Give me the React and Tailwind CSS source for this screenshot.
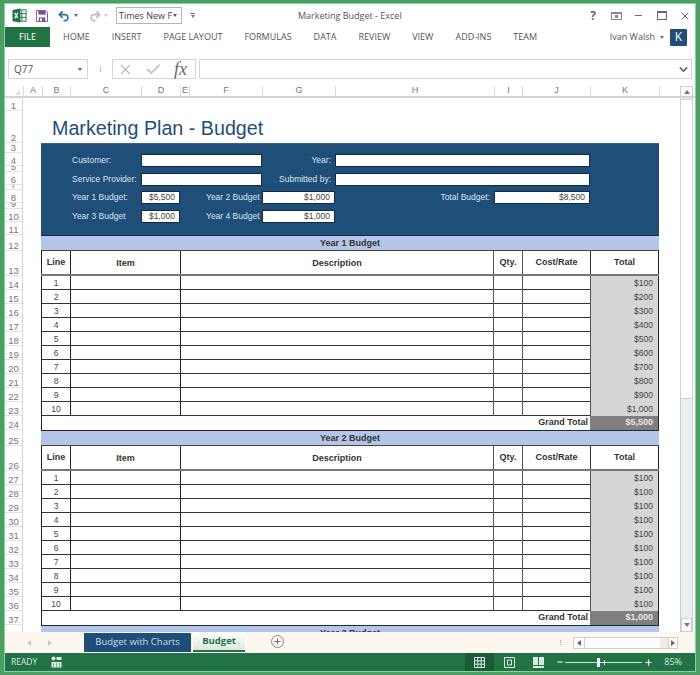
import { ChevronDown, Minus, Plus, X, Check } from 'lucide-react';

const FONT = "font-['Liberation_Sans',Arial,sans-serif]";
const UI_FONT = "font-['Open_Sans','Noto_Sans',sans-serif]";

const RIBBON_TABS = ['HOME', 'INSERT', 'PAGE LAYOUT', 'FORMULAS', 'DATA', 'REVIEW', 'VIEW', 'ADD-INS', 'TEAM'];

const COLUMNS = [
  { label: 'A', width: 'w-[19px]' },
  { label: 'B', width: 'w-[28px]' },
  { label: 'C', width: 'w-[71px]' },
  { label: 'D', width: 'w-[39px]' },
  { label: 'E', width: 'w-[9px]' },
  { label: 'F', width: 'w-[73px]' },
  { label: 'G', width: 'w-[73px]' },
  { label: 'H', width: 'w-[159px]' },
  { label: 'I', width: 'w-[28px]' },
  { label: 'J', width: 'w-[68px]' },
  { label: 'K', width: 'w-[69px]' },
];

const ROW_HEADERS = [
  { n: 1, h: 'h-[13px]' }, { n: 2, h: 'h-[32px]' }, { n: 3, h: 'h-[10px]' }, { n: 4, h: 'h-[13px]' },
  { n: 5, h: 'h-[6px]' }, { n: 6, h: 'h-[13px]' }, { n: 7, h: 'h-[5px]' }, { n: 8, h: 'h-[13px]' },
  { n: 9, h: 'h-[6px]' }, { n: 10, h: 'h-[13px]' }, { n: 11, h: 'h-[13px]' }, { n: 12, h: 'h-[16px]' },
  { n: 13, h: 'h-[25px]' }, { n: 14, h: 'h-[14px]' }, { n: 15, h: 'h-[14px]' }, { n: 16, h: 'h-[14px]' },
  { n: 17, h: 'h-[14px]' }, { n: 18, h: 'h-[14px]' }, { n: 19, h: 'h-[14px]' }, { n: 20, h: 'h-[14px]' },
  { n: 21, h: 'h-[14px]' }, { n: 22, h: 'h-[14px]' }, { n: 23, h: 'h-[14px]' }, { n: 24, h: 'h-[14px]' },
  { n: 25, h: 'h-[16px]' }, { n: 26, h: 'h-[25px]' }, { n: 27, h: 'h-[14px]' }, { n: 28, h: 'h-[14px]' },
  { n: 29, h: 'h-[14px]' }, { n: 30, h: 'h-[14px]' }, { n: 31, h: 'h-[14px]' }, { n: 32, h: 'h-[14px]' },
  { n: 33, h: 'h-[14px]' }, { n: 34, h: 'h-[14px]' }, { n: 35, h: 'h-[14px]' }, { n: 36, h: 'h-[14px]' },
  { n: 37, h: 'h-[14px]' },
];

const YEAR_1 = ['$100', '$200', '$300', '$400', '$500', '$600', '$700', '$800', '$900', '$1,000'];
const YEAR_2 = Array(10).fill('$100');

function ExcelIcon() {
  return (
    <svg width="15" height="15" viewBox="0 0 16 15">
      <rect x="6" y="1.5" width="9" height="12" fill="#fff" stroke="#1e7145" />
      <path d="M10.5 2v11M6 5.5h9M6 9.5h9" stroke="#1e7145" strokeWidth="1" />
      <path d="M0.5 1.5 9 0v15L0.5 13.5z" fill="#1e7145" />
      <path d="M2.8 4.5 6.2 10.5M6.2 4.5 2.8 10.5" stroke="#fff" strokeWidth="1.3" />
    </svg>
  );
}

function SaveIcon() {
  return (
    <svg width="12" height="12" viewBox="0 0 13 13">
      <path d="M0.5 0.5h10l2 2v10h-12z" fill="#fff" stroke="#7b4b94" />
      <rect x="2.5" y="1" width="8" height="4" fill="#7b4b94" />
      <rect x="3" y="8" width="7" height="4.5" fill="#7b4b94" />
      <rect x="4.5" y="9" width="2" height="3" fill="#fff" />
    </svg>
  );
}

function UndoIcon({ color, flip }) {
  return (
    <svg width="13" height="12" viewBox="0 0 14 12" className={flip ? '-scale-x-100' : ''}>
      <path d="M5 1 1.5 4.5 5 8" fill="none" stroke={color} strokeWidth="1.8" />
      <path d="M2 4.5h6.5a3.5 3.5 0 0 1 0 6.5H6" fill="none" stroke={color} strokeWidth="1.8" />
    </svg>
  );
}

function Caret({ className }) {
  return <span className={`w-0 h-0 border-x-[2.5px] border-x-transparent border-t-[3px] ${className}`} />;
}

function TitleBar() {
  return (
    <div className="h-[23px] flex items-center relative">
      <div className="flex items-center pl-[7px] shrink-0">
        <ExcelIcon />
        <div className="ml-[9px]"><SaveIcon /></div>
        <div className="ml-[10px]"><UndoIcon color="#2f6ea8" /></div>
        <Caret className="ml-[3px] border-t-[#666]" />
        <div className="ml-[10px]"><UndoIcon color="#bdbdbd" flip /></div>
        <Caret className="ml-[3px] border-t-[#ccc]" />
        <div className="ml-[8px] w-[66px] h-[17px] border border-[#b5b5b5] flex items-center justify-between pl-[2px] pr-[4px]">
          <span className={`${UI_FONT} text-[9px] text-[#444] whitespace-nowrap`}>Times New F</span>
          <Caret className="border-t-[#555]" />
        </div>
        <div className="ml-[8px] flex flex-col items-center gap-[1px]">
          <span className="w-[5px] h-px bg-[#777]" />
          <Caret className="border-t-[#777]" />
        </div>
      </div>
      <div className={`${UI_FONT} absolute left-[293px] top-[5px] text-[9px] text-[#555] whitespace-nowrap`}>
        Marketing Budget - Excel
      </div>
      <div className="ml-auto flex items-center pr-[4px] text-[#666]">
        <span className={`${UI_FONT} text-[12px] font-bold w-[10px] text-center`}>?</span>
        <span className="ml-[13px] w-[11px] h-[8px] border border-[#888] border-t-2 flex items-center justify-center">
          <span className="w-[3px] h-[3px] bg-[#888]" />
        </span>
        <Minus size={11} strokeWidth={2} className="ml-[11px]" />
        <span className="ml-[13px] w-[10px] h-[9px] border border-[#666] border-t-2" />
        <X size={12} strokeWidth={2} className="ml-[12px]" />
      </div>
    </div>
  );
}

function RibbonTabs() {
  return (
    <div className={`${UI_FONT} h-[20px] flex items-center text-[9px] text-[#555] relative`}>
      <div className="w-[45px] h-full bg-[#217346] text-white flex items-center justify-center">FILE</div>
      <div className="pl-[13px] flex items-center gap-[22px]">
        {RIBBON_TABS.map((tab) => (
          <div key={tab} className="whitespace-nowrap">{tab}</div>
        ))}
      </div>
      <div className="ml-auto flex items-center pr-[8px]">
        <span className="text-[9px] text-[#555] whitespace-nowrap">Ivan Walsh</span>
        <Caret className="ml-[5px] border-t-[#777]" />
        <span className="ml-[6px] w-[17px] h-[17px] bg-[#1f4e79] text-white text-[12px] flex items-center justify-center rounded-[1px]">K</span>
      </div>
    </div>
  );
}

function FormulaBar() {
  return (
    <div className="h-[39px] pt-[12px] pl-[3px] pr-[3px] flex items-start text-[#555]">
      <div className={`${UI_FONT} w-[80px] h-[20px] border border-[#d4d4d4] flex items-center justify-between pl-[5px] pr-[5px] text-[10px]`}>
        Q77
        <Caret className="border-t-[#666]" />
      </div>
      <div className="w-[24px] h-[20px] flex flex-col items-center justify-center gap-[1px]">
        <span className="w-[1px] h-[1px] bg-[#999]" />
        <span className="w-[1px] h-[1px] bg-[#999]" />
        <span className="w-[1px] h-[1px] bg-[#999]" />
      </div>
      <div className="w-[84px] h-[20px] border border-[#d4d4d4] flex items-center pl-[4px]">
        <X size={17} strokeWidth={1.5} className="text-[#b8b8b8]" />
        <Check size={17} strokeWidth={2.5} className="ml-[11px] text-[#c4c4c4]" />
        <span className="ml-[12px] font-['Liberation_Serif',serif] italic text-[18px] leading-none text-[#666]">fx</span>
      </div>
      <div className="ml-[3px] flex-1 h-[20px] border border-[#d4d4d4] flex items-center justify-end pr-[1px]">
        <ChevronDown size={13} strokeWidth={3} className="text-[#666]" />
      </div>
    </div>
  );
}

function ColumnHeaders() {
  return (
    <div className={`${FONT} h-[12px] flex items-stretch text-[9px] text-[#777] border-b-2 border-[#d4d4d4]`}>
      <div className="w-[18px] shrink-0 relative">
        <span className="absolute right-[3px] bottom-[1px] w-0 h-0 border-l-[5px] border-l-transparent border-b-[5px] border-b-[#ddd]" />
      </div>
      {COLUMNS.map((col) => (
        <div key={col.label} className={`${col.width} shrink-0 border-l border-[#dcdcdc] flex items-center justify-center`}>
          {col.label}
        </div>
      ))}
      <div className="w-[21px] border-l border-[#dcdcdc]" />
      <div className="w-[13px] h-[11px] border border-[#cfcfcf] bg-white flex items-center justify-center">
        <span className="w-0 h-0 border-x-[3px] border-x-transparent border-b-[4px] border-b-[#777]" />
      </div>
    </div>
  );
}

function RowHeaders() {
  return (
    <div className={`${FONT} w-[18px] shrink-0 border-r border-[#d4d4d4] text-[9.5px] text-[#777]`}>
      {ROW_HEADERS.map((row) => (
        <div key={row.n} className={`${row.h} border-b border-[#e3e3e3] flex items-end justify-center overflow-hidden leading-[9px]`}>
          {row.n}
        </div>
      ))}
    </div>
  );
}

function FieldLabel({ className = '', children }) {
  return <div className={`text-[8.5px] leading-[13px] text-[#d9e4ef] whitespace-nowrap ${className}`}>{children}</div>;
}

function Field({ className = '', children }) {
  return (
    <div className={`bg-white border border-[#0e2a47] h-[13px] text-[8.5px] leading-[11px] text-[#444] text-right pr-[4px] ${className}`}>
      {children}
    </div>
  );
}

function HeaderPanel() {
  return (
    <div className="bg-[#1f4e79] h-[92px] pt-[10px] grid grid-cols-[29px_71px_39px_9px_73px_73px_159px_96px_68px] grid-rows-[13px_13px_13px_13px] gap-y-[5.5px] border-t border-[#3b6288]">
      <FieldLabel className="col-start-2 pl-[2px]">Customer:</FieldLabel>
      <Field className="col-start-3 col-span-3" />
      <FieldLabel className="col-start-6 text-right pr-[4px]">Year:</FieldLabel>
      <Field className="col-start-7 col-span-2" />

      <FieldLabel className="col-start-2 pl-[2px]">Service Provider:</FieldLabel>
      <Field className="col-start-3 col-span-3" />
      <FieldLabel className="col-start-6 text-right pr-[4px]">Submitted by:</FieldLabel>
      <Field className="col-start-7 col-span-2" />

      <FieldLabel className="col-start-2 pl-[2px]">Year 1 Budget:</FieldLabel>
      <Field className="col-start-3">$5,500</Field>
      <FieldLabel className="col-start-4 col-span-2 pl-[26px]">Year 2 Budget</FieldLabel>
      <Field className="col-start-6">$1,000</Field>
      <FieldLabel className="col-start-7 text-right pr-[4px]">Total Budget:</FieldLabel>
      <Field className="col-start-8">$8,500</Field>

      <FieldLabel className="col-start-2 pl-[2px]">Year 3 Budget</FieldLabel>
      <Field className="col-start-3">$1,000</Field>
      <FieldLabel className="col-start-4 col-span-2 pl-[26px]">Year 4 Budget</FieldLabel>
      <Field className="col-start-6">$1,000</Field>
    </div>
  );
}

function BudgetBand({ title }) {
  return (
    <div className="h-[16px] bg-[#b4c6e7] border-t border-[#1c2b3a] border-b border-b-[#444] text-[9px] leading-[14px] font-bold text-[#333] text-center">
      {title}
    </div>
  );
}

const TABLE_COLS = 'grid grid-cols-[29px_110px_313px_29px_68px_69px]';

function BudgetTable({ title, totals, grandTotal }) {
  return (
    <div>
      <BudgetBand title={title} />
      <div className={`${TABLE_COLS} h-[25px] border-b-[2px] border-[#777] text-[9px] font-bold text-[#333] text-center bg-white`}>
        <div className="border-l border-[#222] flex items-center justify-center">Line</div>
        <div className="border-l border-[#222] pt-[6px]">Item</div>
        <div className="border-l border-[#222] pt-[6px]">Description</div>
        <div className="border-l border-[#555] flex items-center justify-center">Qty.</div>
        <div className="border-l border-[#555] flex items-center justify-center">Cost/Rate</div>
        <div className="border-l border-[#333] border-r border-r-[#222] flex items-center justify-center">Total</div>
      </div>
      {totals.map((value, i) => (
        <div key={i} className={`${TABLE_COLS} h-[14px] border-b border-[#333] text-[8.5px] leading-[14px] text-[#444]`}>
          <div className="border-l border-[#222] text-center">{i + 1}</div>
          <div className="border-l border-[#222]" />
          <div className="border-l border-[#222]" />
          <div className="border-l border-[#555]" />
          <div className="border-l border-[#555]" />
          <div className="border-l border-[#555] border-r border-r-[#222] bg-[#d6d6d6] text-right pr-[5px]">{value}</div>
        </div>
      ))}
      <div className="h-[14px] flex border-l border-[#222] text-[9px] leading-[13px] font-bold">
        <div className="flex-1 text-right pr-[2px] text-[#333]">Grand Total</div>
        <div className="w-[69px] bg-[#7f7f7f] text-[#e8e8e8] text-right pr-[5px] border-r border-[#222]">{grandTotal}</div>
      </div>
    </div>
  );
}

function Scrollbar() {
  return (
    <div className="w-[13px] shrink-0 flex flex-col bg-[#e9efec] border-x border-[#cfcfcf]">
      <div className="h-[300px] mt-[1px] w-full bg-white border-y border-[#cfcfcf]" />
      <div className="mt-auto h-[14px] bg-white border border-[#cfcfcf] flex items-center justify-center">
        <span className="w-0 h-0 border-x-[3px] border-x-transparent border-t-[4px] border-t-[#777]" />
      </div>
    </div>
  );
}

function SheetTabs() {
  return (
    <div className="h-[21px] bg-[#fdf8ef] flex items-start relative">
      <span className="ml-[22px] mt-[8px] w-0 h-0 border-y-[3px] border-y-transparent border-r-[4px] border-r-[#ccc]" />
      <span className="ml-[17px] mt-[8px] w-0 h-0 border-y-[3px] border-y-transparent border-l-[4px] border-l-[#ccc]" />
      <div className={`${UI_FONT} ml-[32px] mt-[1px] w-[107px] h-[19px] bg-[#1f4e79] text-[#cfdce9] text-[9.5px] flex items-center justify-center whitespace-nowrap`}>
        Budget with Charts
      </div>
      <div className={`${UI_FONT} ml-[2px] w-[52px] h-[20px] bg-gradient-to-b from-white to-[#dfe7e2] border-b-2 border-[#217346] text-[#217346] text-[9.5px] font-bold flex items-center justify-center`}>
        Budget
      </div>
      <div className="ml-[26px] mt-[3px] w-[13px] h-[13px] rounded-full border border-[#888] flex items-center justify-center text-[#666]">
        <Plus size={9} strokeWidth={2.5} />
      </div>
      <div className="absolute right-[17px] top-[4px] flex items-center h-[13px]">
        <div className="mr-[12px] flex flex-col gap-[1px]">
          <span className="w-[1px] h-[1px] bg-[#999]" />
          <span className="w-[1px] h-[1px] bg-[#999]" />
          <span className="w-[1px] h-[1px] bg-[#999]" />
        </div>
        <div className="w-[12px] h-[12px] bg-white border border-[#cfcfcf] flex items-center justify-center">
          <span className="w-0 h-0 border-y-[3px] border-y-transparent border-r-[4px] border-r-[#666]" />
        </div>
        <div className="w-[75px] h-[12px] bg-white border-y border-[#cfcfcf]" />
        <div className="w-[8px] h-[12px] bg-[#f0ede6] border-y border-[#cfcfcf]" />
        <div className="w-[10px] h-[12px] bg-white border border-[#cfcfcf] flex items-center justify-center">
          <span className="w-0 h-0 border-y-[3px] border-y-transparent border-l-[4px] border-l-[#666]" />
        </div>
      </div>
    </div>
  );
}

function GridIcon() {
  return (
    <svg width="11" height="11" viewBox="0 0 11 11" fill="none" stroke="#dbe9e1">
      <path d="M.5.5h10v10H.5zM3.8.5v10M7.2.5v10M.5 3.8h10M.5 7.2h10" />
    </svg>
  );
}

function StatusBar() {
  return (
    <div className={`${UI_FONT} h-[18px] bg-[#217346] flex items-center text-[8.5px] text-[#dbe9e1]`}>
      <span className="ml-[6px]">READY</span>
      <svg width="11" height="12" viewBox="0 0 11 12" className="ml-[14px]" fill="#dbe9e1">
        <circle cx="2.5" cy="2.5" r="2" />
        <path d="M5.5 1h5v3h-5zM.5 6h10v5.5H.5z" />
        <path d="M2 8h1M5 8h1M8 8h1M2 10h1M5 10h1M8 10h1" stroke="#217346" />
      </svg>
      <div className="ml-[403px] w-[29px] h-full bg-[#1a5c38] flex items-center justify-center"><GridIcon /></div>
      <svg width="11" height="11" viewBox="0 0 11 11" className="ml-[10px]" fill="none" stroke="#dbe9e1">
        <path d="M.5.5h10v10H.5zM3.5 3h4v5h-4z" />
      </svg>
      <svg width="11" height="11" viewBox="0 0 11 11" className="ml-[18px]" fill="#dbe9e1">
        <path d="M0 0h5v8H0zM6 0h5v8H6zM0 9h11v2H0z" />
      </svg>
      <Minus size={8} strokeWidth={3} className="ml-[12px] text-white" />
      <div className="ml-[1px] w-[77px] h-px bg-[#dbe9e1] relative">
        <span className="absolute left-[32px] -top-[4px] w-[3px] h-[9px] bg-white" />
        <span className="absolute left-[39px] -top-[2px] w-px h-[5px] bg-[#dbe9e1]" />
      </div>
      <Plus size={9} strokeWidth={3} className="ml-[2px] text-white" />
      <span className="ml-[11px] text-[9px]">85%</span>
    </div>
  );
}

export default function App() {
  return (
    <div className="w-[700px] h-[675px] bg-[#4c9f63] pt-[3px] pb-[3px] pl-[4px] pr-[4px] overflow-hidden">
      <div className="w-[692px] h-[669px] bg-white border border-[#8ccf9e] flex flex-col overflow-hidden">
        <TitleBar />
        <RibbonTabs />
        <FormulaBar />
        <ColumnHeaders />
        <div className={`${FONT} flex h-[534px] overflow-hidden`}>
          <RowHeaders />
          <div className="w-[18px] shrink-0" />
          <div className="w-[618px] shrink-0">
            <div className="h-[45px] pt-[18px] pl-[11px] text-[19.7px] leading-[24px] text-[#1f4e79]">
              Marketing Plan - Budget
            </div>
            <HeaderPanel />
            <BudgetTable title="Year 1 Budget" totals={YEAR_1} grandTotal="$5,500" />
            <BudgetTable title="Year 2 Budget" totals={YEAR_2} grandTotal="$1,000" />
            <BudgetBand title="Year 3 Budget" />
          </div>
          <div className="w-[21px] shrink-0" />
          <Scrollbar />
        </div>
        <SheetTabs />
        <StatusBar />
      </div>
    </div>
  );
}
